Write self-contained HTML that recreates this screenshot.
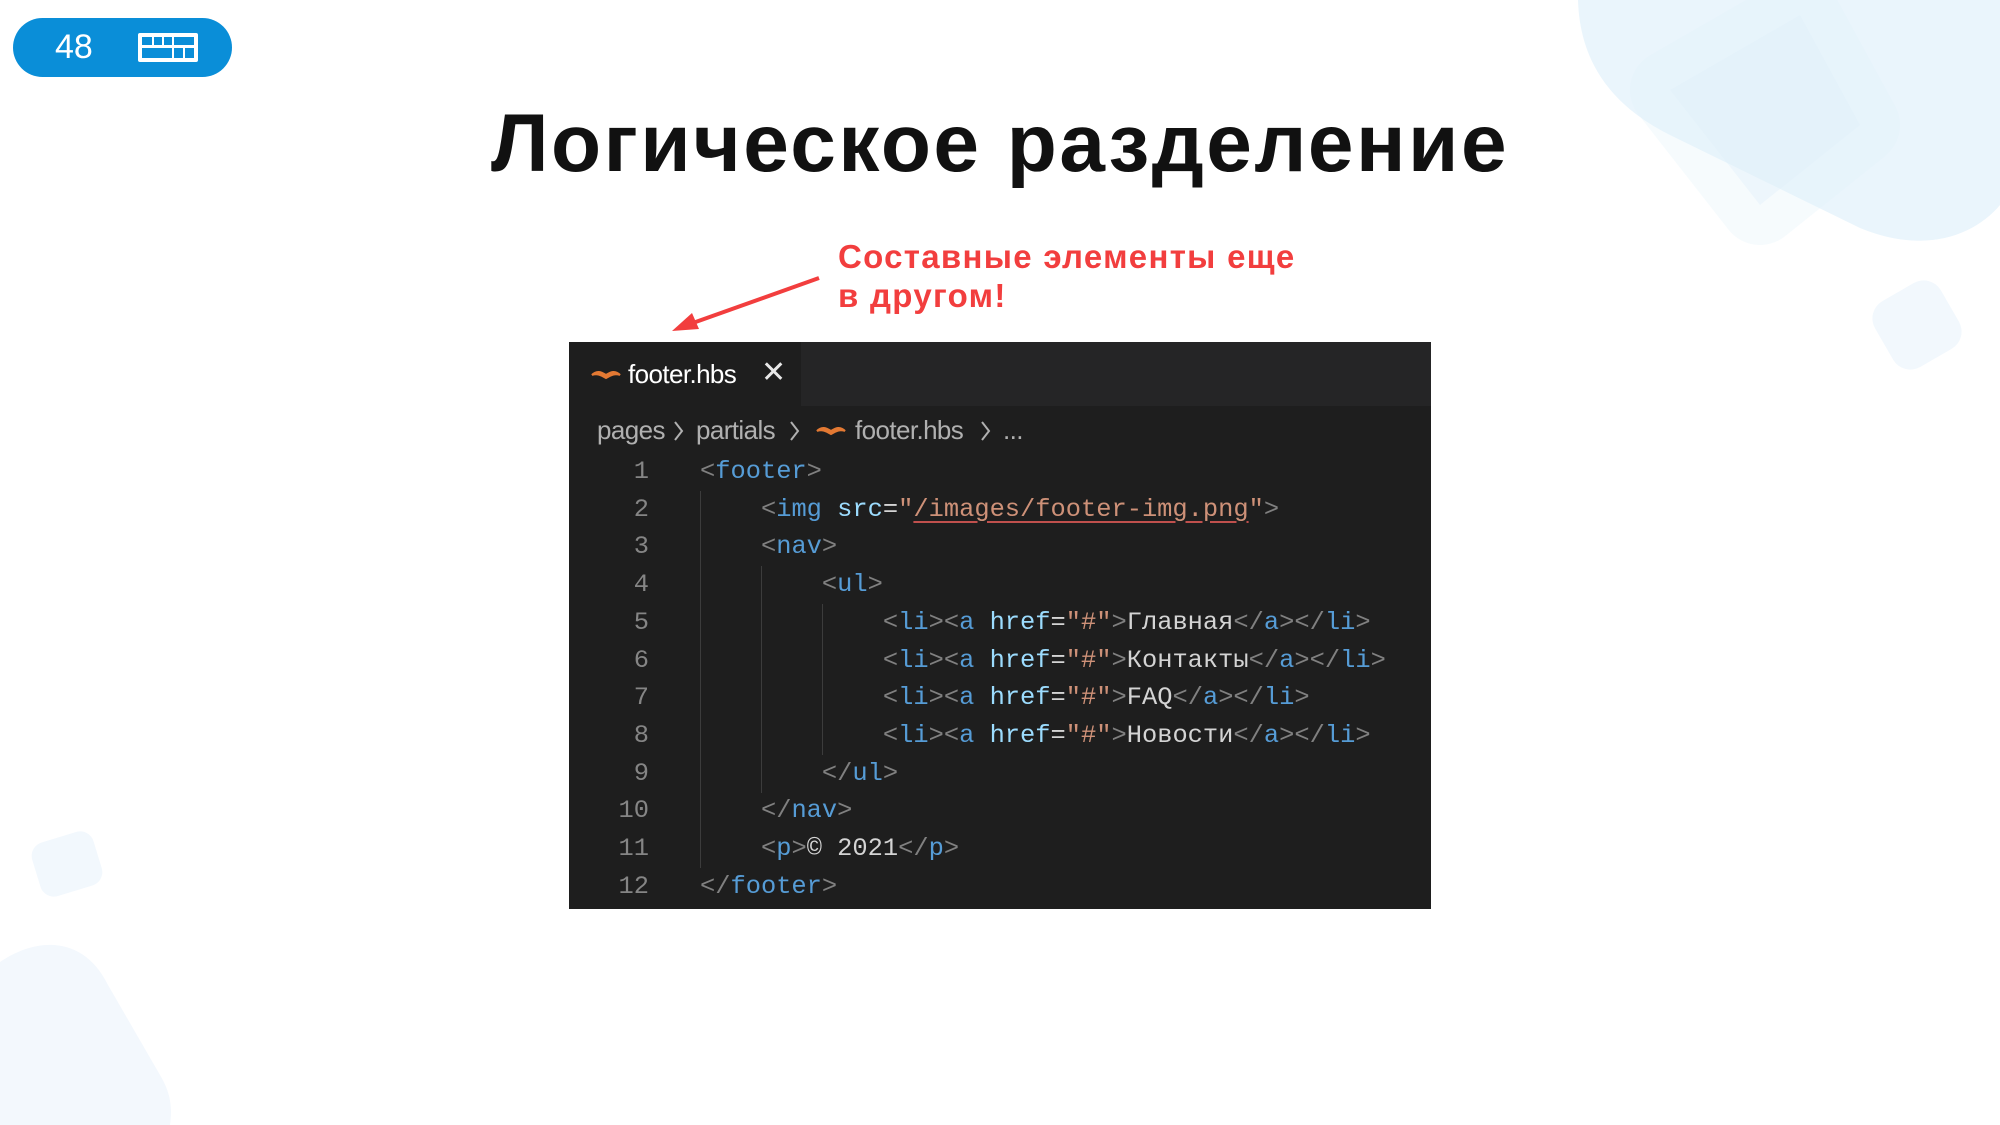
<!DOCTYPE html>
<html><head><meta charset="utf-8"><style>
*{margin:0;padding:0;box-sizing:border-box}
body{width:2000px;height:1125px;overflow:hidden;background:#fff;position:relative;font-family:"Liberation Sans",sans-serif}
.abs{position:absolute}
#title{left:0;width:2000px;top:96px;text-align:center;font-size:82px;font-weight:bold;color:#111;letter-spacing:2.5px;line-height:96px}
#note{left:838px;top:237px;font-size:33px;font-weight:bold;color:#f23e3e;line-height:39px;letter-spacing:1.3px}
#panel{left:569px;top:342px;width:862px;height:567px;background:#1e1e1e}
#tabbar{left:0;top:0;width:862px;height:64px;background:#252526}
#tab{left:0;top:0;width:232px;height:64px;background:#1e1e1e}
.ui{font-family:"Liberation Sans",sans-serif;letter-spacing:-0.6px;font-size:26px;line-height:32px}
.bc{color:#b0b0b0;top:72px}
pre{font-family:"Liberation Mono",monospace;font-size:25.4px;line-height:37.7px;color:#d4d4d4}
.g{color:#808080}.t{color:#569cd6}.a{color:#9cdcfe}.s{color:#ce9178}
.ln{color:#858585;text-align:right;width:80px}
.guide{position:absolute;width:1px;background:#3c3c3c}
</style></head><body>
<svg class="abs" style="left:0;top:0" width="2000" height="1125">
<path d="M1578,0 C1580,70 1620,110 1670,135 L1860,228 C1925,255 1975,235 2000,205 L2000,0 Z" fill="#eaf5fc"/>
<polygon points="1670,90 1800,15 1860,125 1760,205" fill="#e0f0fa" opacity="0.55" stroke="#e0f0fa" stroke-width="80" stroke-linejoin="round" stroke-opacity="0.55"/>
<g transform="translate(1917,325) rotate(-30)"><rect x="-38" y="-38" width="76" height="76" rx="20" fill="#f2f8fd"/></g>
<g transform="translate(67,864) rotate(-17)"><rect x="-32" y="-28" width="64" height="56" rx="14" fill="#f2f8fd"/></g>
<path d="M0,962 C40,935 85,938 108,985 L160,1075 C172,1095 172,1110 170,1125 L0,1125 Z" fill="#f3f8fd"/>
<path d="M819,278 L690,324" stroke="#f23e3e" stroke-width="4"/>
<polygon points="672,331 692,313 699,329" fill="#f23e3e"/>
</svg>
<div class="abs" style="left:13px;top:18px;width:219px;height:59px;border-radius:30px;background:#0a8ed8"></div>
<div class="abs" style="left:55px;top:27px;font-size:34px;color:#fff;line-height:40px">48</div>
<svg class="abs" style="left:137px;top:32px" width="62" height="31">
<rect x="1" y="1" width="60" height="29" rx="2" fill="#fff"/>
<g fill="#0a8ed8"><rect x="5" y="5" width="10" height="8"/><rect x="17" y="5" width="8" height="8"/><rect x="27" y="5" width="8" height="8"/><rect x="37" y="5" width="20" height="8"/>
<rect x="5" y="16" width="30" height="10"/><rect x="37" y="16" width="9" height="10"/><rect x="48" y="16" width="9" height="10"/></g></svg>
<div id="title" class="abs">Логическое разделение</div>
<div id="note" class="abs">Составные элементы еще<br>в другом!</div>
<div id="panel" class="abs">
<div id="tabbar" class="abs"></div>
<div id="tab" class="abs"></div>
<svg class="abs" style="left:22px;top:27px" width="30" height="12"><path d="M1,6 C6,1 10,3 15,6 C20,3 24,1 29,6 C24,4 20,6 15,9 C10,6 6,4 1,6Z" fill="#e37933" stroke="#e37933" stroke-width="2"/></svg>
<div class="abs ui" style="left:59px;top:16px;color:#fff">footer.hbs</div>
<div class="abs" style="left:192px;top:14px;color:#e8e8e8;font-size:30px;line-height:34px">✕</div>
<div class="abs ui bc" style="left:28px">pages</div>
<div class="abs ui bc" style="left:127px">partials</div>
<div class="abs ui bc" style="left:286px">footer.hbs</div>
<div class="abs ui bc" style="left:434px">...</div>
<svg class="abs" style="left:0;top:72px" width="450" height="32"><g stroke="#b0b0b0" stroke-width="2" fill="none"><path d="M106,8 L113,17 L106,26"/><path d="M222,8 L229,17 L222,26"/><path d="M413,8 L420,17 L413,26"/></g>
<path d="M248,17 C253,12 257,14 262,17 C267,14 271,12 276,17 C271,15 267,17 262,20 C257,17 253,15 248,17Z" fill="#e37933" stroke="#e37933" stroke-width="2"/></svg>
<pre class="abs ln" style="left:0;top:111px">1
2
3
4
5
6
7
8
9
10
11
12</pre>
<div class="guide" style="left:131px;top:149px;height:377px"></div>
<div class="guide" style="left:192px;top:224px;height:227px"></div>
<div class="guide" style="left:253px;top:262px;height:151px"></div>
<pre class="abs" style="left:131px;top:111px"><span class="g">&lt;</span><span class="t">footer</span><span class="g">&gt;</span>
    <span class="g">&lt;</span><span class="t">img</span> <span class="a">src</span>=<span class="s">"<span style="text-decoration:underline;text-decoration-color:#c0504d;text-underline-offset:5px">/images/footer-img.png</span>"</span><span class="g">&gt;</span>
    <span class="g">&lt;</span><span class="t">nav</span><span class="g">&gt;</span>
        <span class="g">&lt;</span><span class="t">ul</span><span class="g">&gt;</span>
            <span class="g">&lt;</span><span class="t">li</span><span class="g">&gt;&lt;</span><span class="t">a</span> <span class="a">href</span>=<span class="s">"#"</span><span class="g">&gt;</span>Главная<span class="g">&lt;/</span><span class="t">a</span><span class="g">&gt;&lt;/</span><span class="t">li</span><span class="g">&gt;</span>
            <span class="g">&lt;</span><span class="t">li</span><span class="g">&gt;&lt;</span><span class="t">a</span> <span class="a">href</span>=<span class="s">"#"</span><span class="g">&gt;</span>Контакты<span class="g">&lt;/</span><span class="t">a</span><span class="g">&gt;&lt;/</span><span class="t">li</span><span class="g">&gt;</span>
            <span class="g">&lt;</span><span class="t">li</span><span class="g">&gt;&lt;</span><span class="t">a</span> <span class="a">href</span>=<span class="s">"#"</span><span class="g">&gt;</span>FAQ<span class="g">&lt;/</span><span class="t">a</span><span class="g">&gt;&lt;/</span><span class="t">li</span><span class="g">&gt;</span>
            <span class="g">&lt;</span><span class="t">li</span><span class="g">&gt;&lt;</span><span class="t">a</span> <span class="a">href</span>=<span class="s">"#"</span><span class="g">&gt;</span>Новости<span class="g">&lt;/</span><span class="t">a</span><span class="g">&gt;&lt;/</span><span class="t">li</span><span class="g">&gt;</span>
        <span class="g">&lt;/</span><span class="t">ul</span><span class="g">&gt;</span>
    <span class="g">&lt;/</span><span class="t">nav</span><span class="g">&gt;</span>
    <span class="g">&lt;</span><span class="t">p</span><span class="g">&gt;</span>© 2021<span class="g">&lt;/</span><span class="t">p</span><span class="g">&gt;</span>
<span class="g">&lt;/</span><span class="t">footer</span><span class="g">&gt;</span></pre>
</div>
</body></html>
